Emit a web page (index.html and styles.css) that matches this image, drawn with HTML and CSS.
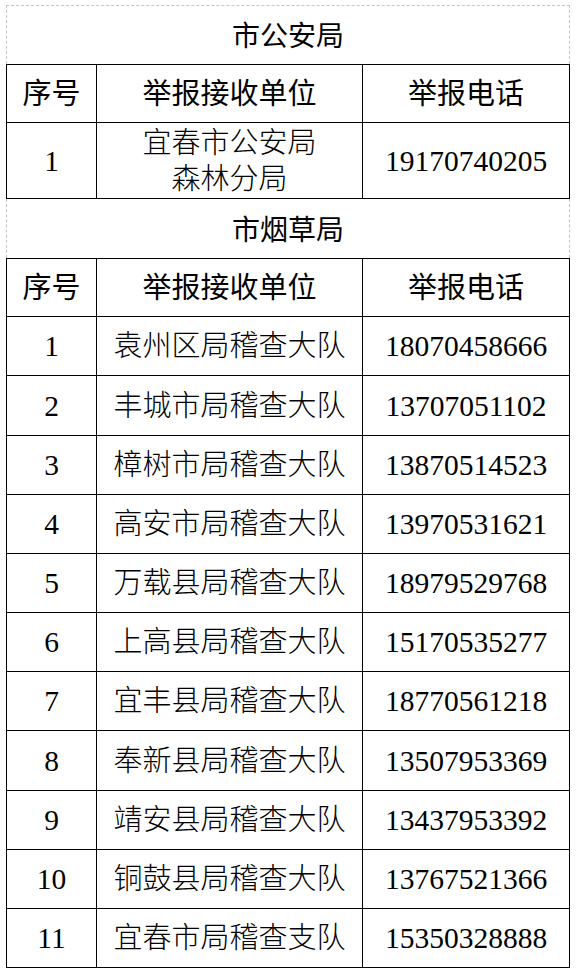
FILE: index.html
```html
<!DOCTYPE html>
<html lang="zh-CN">
<head>
<meta charset="utf-8">
<title>举报电话</title>
<link rel="stylesheet" href="styles.css">
</head>
<body>
<div class="sheet">
  <div class="title first">市公安局</div>
  <div class="grid police">
    <div class="cell head">序号</div>
    <div class="cell head">举报接收单位</div>
    <div class="cell head">举报电话</div>
    <div class="cell num">1</div>
    <div class="cell two">宜春市公安局<br>森林分局</div>
    <div class="cell num">19170740205</div>
  </div>
  <div class="title">市烟草局</div>
  <div class="grid tobacco">
    <div class="cell head">序号</div>
    <div class="cell head">举报接收单位</div>
    <div class="cell head">举报电话</div>

    <div class="cell num">1</div><div class="cell">袁州区局稽查大队</div><div class="cell num">18070458666</div>
    <div class="cell num">2</div><div class="cell">丰城市局稽查大队</div><div class="cell num">13707051102</div>
    <div class="cell num">3</div><div class="cell">樟树市局稽查大队</div><div class="cell num">13870514523</div>
    <div class="cell num">4</div><div class="cell">高安市局稽查大队</div><div class="cell num">13970531621</div>
    <div class="cell num">5</div><div class="cell">万载县局稽查大队</div><div class="cell num">18979529768</div>
    <div class="cell num">6</div><div class="cell">上高县局稽查大队</div><div class="cell num">15170535277</div>
    <div class="cell num">7</div><div class="cell">宜丰县局稽查大队</div><div class="cell num">18770561218</div>
    <div class="cell num">8</div><div class="cell">奉新县局稽查大队</div><div class="cell num">13507953369</div>
    <div class="cell num">9</div><div class="cell">靖安县局稽查大队</div><div class="cell num">13437953392</div>
    <div class="cell num">10</div><div class="cell">铜鼓县局稽查大队</div><div class="cell num">13767521366</div>
    <div class="cell num">11</div><div class="cell">宜春市局稽查支队</div><div class="cell num">15350328888</div>
  </div>
</div>
</body>
</html>
```

FILE: styles.css
```css
html, body {
  margin: 0;
  padding: 0;
  background: #fff;
}

body {
  font-family: "Liberation Serif", "Noto Sans CJK SC", serif;
  color: #000;
}

.sheet {
  padding: 5px 0 0 6px;
  width: 564px;
}

.title {
  box-sizing: border-box;
  width: 564px;
  height: 59px;
  border-left: 1px dashed #c4c4c4;
  border-right: 1px dashed #c4c4c4;
  display: flex;
  align-items: center;
  justify-content: center;
  font-size: 28px;
  font-weight: 400;
  padding-bottom: 2px;
}

.title.first {
  border-top: 1px dashed #c4c4c4;
}

.grid {
  display: grid;
  grid-template-columns: 89px 265px 206px;
  gap: 1px;
  background: #000;
  border: 1px solid #000;
  width: 562px;
}

.police {
  grid-template-rows: 57px 75px;
}

.tobacco {
  grid-template-rows: 57px 58px 59px 58px 58px 58px 58px 58px 59px 58px 58px 58px;
}

.cell {
  background: #fff;
  display: flex;
  align-items: center;
  justify-content: center;
  text-align: center;
  font-size: 29px;
  font-weight: 300;
  line-height: 36px;
  white-space: nowrap;
}

.cell.head {
  font-weight: 400;
}

.cell.num {
  font-weight: 400;
  font-size: 29.5px;
}
```
